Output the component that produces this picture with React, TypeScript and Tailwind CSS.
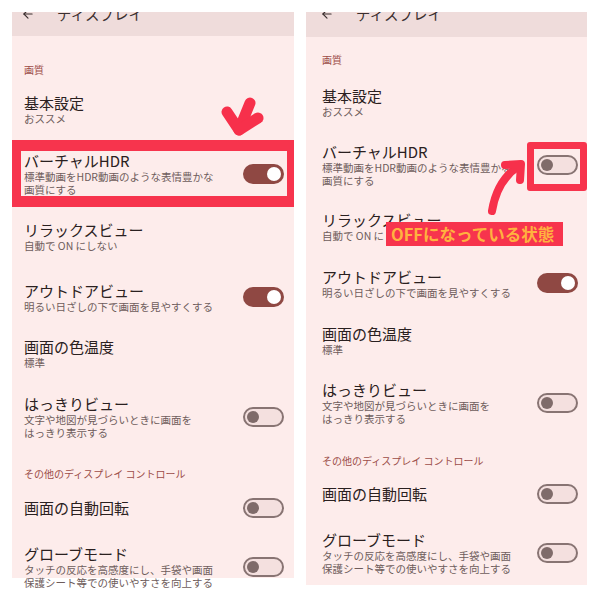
import { ArrowLeft } from "lucide-react"

const font = "font-['Noto_Sans_CJK_JP','Noto_Sans',sans-serif]"

function Toggle({ on }: { on: boolean }) {
  if (on) {
    return (
      <div className="relative w-[41px] h-[20px] shrink-0 rounded-full bg-[#8f4843]">
        <div className="absolute right-[3px] top-[3px] w-[14px] h-[14px] rounded-full bg-white" />
      </div>
    )
  }
  return (
    <div className="relative w-[41px] h-[20px] shrink-0 rounded-full border-2 border-[#887473] bg-[#f4e0df]">
      <div className="absolute left-[2px] top-[2px] w-[12px] h-[12px] rounded-full bg-[#7f6b6a]" />
    </div>
  )
}

type ItemProps = {
  title: string
  sub?: string[]
  toggle?: "on" | "off"
  className?: string
}

function Item({ title, sub, toggle, className }: ItemProps) {
  return (
    <div className={`flex items-center justify-between shrink-0 ${className}`}>
      <div className="flex flex-col">
        <div className="text-[15px] leading-[18px] text-[#2a2020]">{title}</div>
        {sub &&
          sub.map((s) => (
            <div key={s} className="text-[10.5px] leading-[13px] text-[#6e5c5b] whitespace-nowrap">
              {s}
            </div>
          ))}
      </div>
      {toggle && <Toggle on={toggle === "on"} />}
    </div>
  )
}

function Header({ className }: { className: string }) {
  return (
    <div className={`shrink-0 bg-[#efdcdb] overflow-hidden ${className}`}>
      <div className="flex items-center -mt-[6px] h-[16px] text-[#3a2f2f]">
        <ArrowLeft size={14} strokeWidth={2} />
        <span className="text-[14.5px] leading-[16px] ml-[22px]">ディスプレイ</span>
      </div>
    </div>
  )
}

export default function App() {
  return (
    <div className={`relative w-[600px] h-[600px] bg-white overflow-hidden flex gap-3 pl-3 pt-3 ${font}`}>
      {/* left screen */}
      <div className="w-[282px] h-[566px] bg-[#fdeceb] flex flex-col shrink-0">
        <Header className="h-[24px] pl-[9px]" />
        <div className="mt-[20px] h-[26px] shrink-0 flex items-center pl-3 text-[10px] text-[#9c4d48]">画質</div>
        <Item title="基本設定" sub={["おススメ"]} className="h-[58px] pb-[4px] pl-3 pr-[10px]" />
        <div className="h-[67px] shrink-0 border-t-[11px] border-b-[11px] border-l-[9px] border-r-[7px] border-[#f7344d] flex">
          <Item
            title="バーチャルHDR"
            sub={["標準動画をHDR動画のような表情豊かな", "画質にする"]}
            toggle="on"
            className="flex-1 pl-[3px] pr-[3px]"
          />
        </div>
        <Item title="リラックスビュー" sub={["自動で ON にしない"]} className="h-[59px] pl-3 pr-[10px]" />
        <Item title="アウトドアビュー" sub={["明るい日ざしの下で画面を見やすくする"]} toggle="on" className="h-[62px] pl-3 pr-[10px]" />
        <Item title="画面の色温度" sub={["標準"]} className="h-[51px] pl-3 pr-[10px]" />
        <Item
          title="はっきりビュー"
          sub={["文字や地図が見づらいときに画面を", "はっきり表示する"]}
          toggle="off"
          className="h-[76px] pl-3 pr-[10px]"
        />
        <div className="h-[36px] shrink-0 flex items-center pl-3 text-[10px] text-[#9c4d48]">その他のディスプレイ コントロール</div>
        <Item title="画面の自動回転" toggle="off" className="h-[34px] pl-3 pr-[10px]" />
        <Item
          title="グローブモード"
          sub={["タッチの反応を高感度にし、手袋や画面", "保護シート等での使いやすさを向上する"]}
          toggle="off"
          className="h-[84px] pl-3 pr-[10px]"
        />
      </div>

      {/* right screen */}
      <div className="w-[281px] h-[573px] bg-[#fdeceb] flex flex-col shrink-0">
        <Header className="h-[25px] pl-[14px]" />
        <div className="mt-[9px] h-[26px] shrink-0 flex items-center pl-4 text-[10px] text-[#9c4d48]">画質</div>
        <Item title="基本設定" sub={["おススメ"]} className="h-[60px] pl-4 pr-[9px]" />
        <Item
          title="バーチャルHDR"
          sub={["標準動画をHDR動画のような表情豊かな", "画質にする"]}
          toggle="off"
          className="h-[66px] pl-4 pr-[9px]"
        />
        <Item title="リラックスビュー" sub={["自動で ON にしない"]} className="h-[57px] pl-4 pr-[9px]" />
        <Item title="アウトドアビュー" sub={["明るい日ざしの下で画面を見やすくする"]} toggle="on" className="h-[56px] pl-4 pr-[9px]" />
        <Item title="画面の色温度" sub={["標準"]} className="h-[58px] pl-4 pr-[9px]" />
        <Item
          title="はっきりビュー"
          sub={["文字や地図が見づらいときに画面を", "はっきり表示する"]}
          toggle="off"
          className="h-[68px] pl-4 pr-[9px]"
        />
        <div className="h-[46px] shrink-0 flex items-center pl-4 text-[10px] text-[#9c4d48]">その他のディスプレイ コントロール</div>
        <Item title="画面の自動回転" toggle="off" className="h-[22px] pl-4 pr-[9px]" />
        <Item
          title="グローブモード"
          sub={["タッチの反応を高感度にし、手袋や画面", "保護シート等での使いやすさを向上する"]}
          toggle="off"
          className="h-[96px] pl-4 pr-[9px]"
        />
      </div>

      {/* annotations */}
      <svg className="absolute left-0 top-0 pointer-events-none" width="600" height="600">
        <g stroke="#f7304b" strokeLinecap="round" strokeLinejoin="round" fill="none">
          <path d="M227 112 L239 130 L250 103" strokeWidth="11" />
          <path d="M239 130 L258 118" strokeWidth="11" />
          <path d="M492 211 Q497 180 519 166" strokeWidth="8" />
          <path d="M505 165 L521 164 L520 180" strokeWidth="8" />
        </g>
      </svg>
      <div className="absolute left-[527px] top-[142px] w-[60px] h-[49px] border-[7px] border-[#f7344d] rounded-[3px]" />
      <div className="absolute left-[386px] top-[222px] w-[177px] h-[24px] bg-[#f7344d] flex items-center pl-[5px] text-[16.5px] font-bold leading-[20px] text-[#ffb23f] whitespace-nowrap">
        OFFになっている状態
      </div>
    </div>
  )
}
